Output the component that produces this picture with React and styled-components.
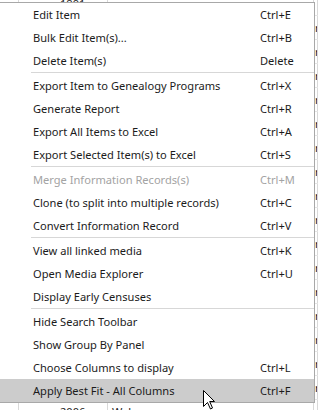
import React from 'react';
import styled, { createGlobalStyle } from 'styled-components';

const GlobalStyle = createGlobalStyle`
  html, body {
    margin: 0;
    padding: 0;
    background: #ffffff;
    overflow: hidden;
  }
  body {
    font-family: "Noto Sans", "Liberation Sans", sans-serif;
  }
`

const Screen = styled.div`
  position: relative;
  width: 318px;
  height: 410px;
  overflow: hidden;
  background: #ffffff;
`

const Grid = styled.div`
  display: flex;
  flex-direction: column;
  margin-top: -8px;
`

const GridRow = styled.div`
  display: grid;
  grid-template-columns: 19px 89px 206px 1fr;
  height: 23px;
  border-bottom: 1px solid #e4e4e4;
  font-size: 11.1px;
  color: #222;
`

const Cell = styled.div`
  display: flex;
  align-items: center;
  padding-left: ${p => p.pad || 0}px;
  border-right: 1px solid #d9d9d9;
  white-space: nowrap;
  overflow: hidden;
`

const Menu = styled.div`
  position: absolute;
  top: 2px;
  left: -1px;
  width: 314px;
  background: #ffffff;
  border: 1px solid #a8a8a8;
  display: flex;
  flex-direction: column;
`

const Item = styled.div`
  display: grid;
  grid-template-columns: 33px 1fr 54px;
  align-items: center;
  height: 23px;
  font-size: 11.1px;
  color: ${p => (p.disabled ? '#a3a3a3' : '#1b1b1b')};
  background: ${p => (p.active ? '#cccccc' : 'transparent')};
  white-space: nowrap;
`

const Label = styled.span`
  grid-column: 2;
`

const Shortcut = styled.span`
  grid-column: 3;
`

const Separator = styled.div`
  height: 1px;
  margin: 0 0 1px 31px;
  background: #d7d7d7;
`

const Cursor = styled.svg`
  position: absolute;
  left: 203px;
  top: 390px;
`

const groups = [
  [
    ['Edit Item', 'Ctrl+E'],
    ['Bulk Edit Item(s)...', 'Ctrl+B'],
    ['Delete Item(s)', 'Delete'],
  ],
  [
    ['Export Item to Genealogy Programs', 'Ctrl+X'],
    ['Generate Report', 'Ctrl+R'],
    ['Export All Items to Excel', 'Ctrl+A'],
    ['Export Selected Item(s) to Excel', 'Ctrl+S'],
  ],
  [
    ['Merge Information Records(s)', 'Ctrl+M', 'disabled'],
    ['Clone (to split into multiple records)', 'Ctrl+C'],
    ['Convert Information Record', 'Ctrl+V'],
  ],
  [
    ['View all linked media', 'Ctrl+K'],
    ['Open Media Explorer', 'Ctrl+U'],
    ['Display Early Censuses', ''],
  ],
  [
    ['Hide Search Toolbar', ''],
    ['Show Group By Panel', ''],
    ['Choose Columns to display', 'Ctrl+L'],
    ['Apply Best Fit - All Columns', 'Ctrl+F', 'active'],
  ],
];

const rows = Array.from({ length: 18 }, (_, i) => i);

const App = () => {
  return (
    <Screen>
      <GlobalStyle />
      <Grid>
        {rows.map(i => (
          <GridRow key={i}>
            <Cell />
            <Cell pad={41}>{i === 17 ? '2006' : i === 0 ? '1891' : ''}</Cell>
            <Cell pad={4}>{i === 17 ? 'Wales' : ''}</Cell>
            <Cell pad={1}>{i > 0 && i < 17 ? 'r' : ''}</Cell>
          </GridRow>
        ))}
      </Grid>
      <Menu>
        {groups.map((group, gi) => (
          <React.Fragment key={gi}>
            {gi > 0 && <Separator />}
            {group.map(([label, key, state]) => (
              <Item key={label} disabled={state === 'disabled'} active={state === 'active'}>
                <Label>{label}</Label>
                <Shortcut>{key}</Shortcut>
              </Item>
            ))}
          </React.Fragment>
        ))}
      </Menu>
      <Cursor width="13" height="20" viewBox="0 0 13 20">
        <path d="M0.5 0.5 L0.5 16.5 L4.5 12.5 L7.5 19 L9.5 18 L6.7 11.5 L11.5 11.5 Z" fill="#ffffff" stroke="#000000" strokeWidth="1" strokeLinejoin="miter" />
      </Cursor>
    </Screen>
  );
}

export default App;
